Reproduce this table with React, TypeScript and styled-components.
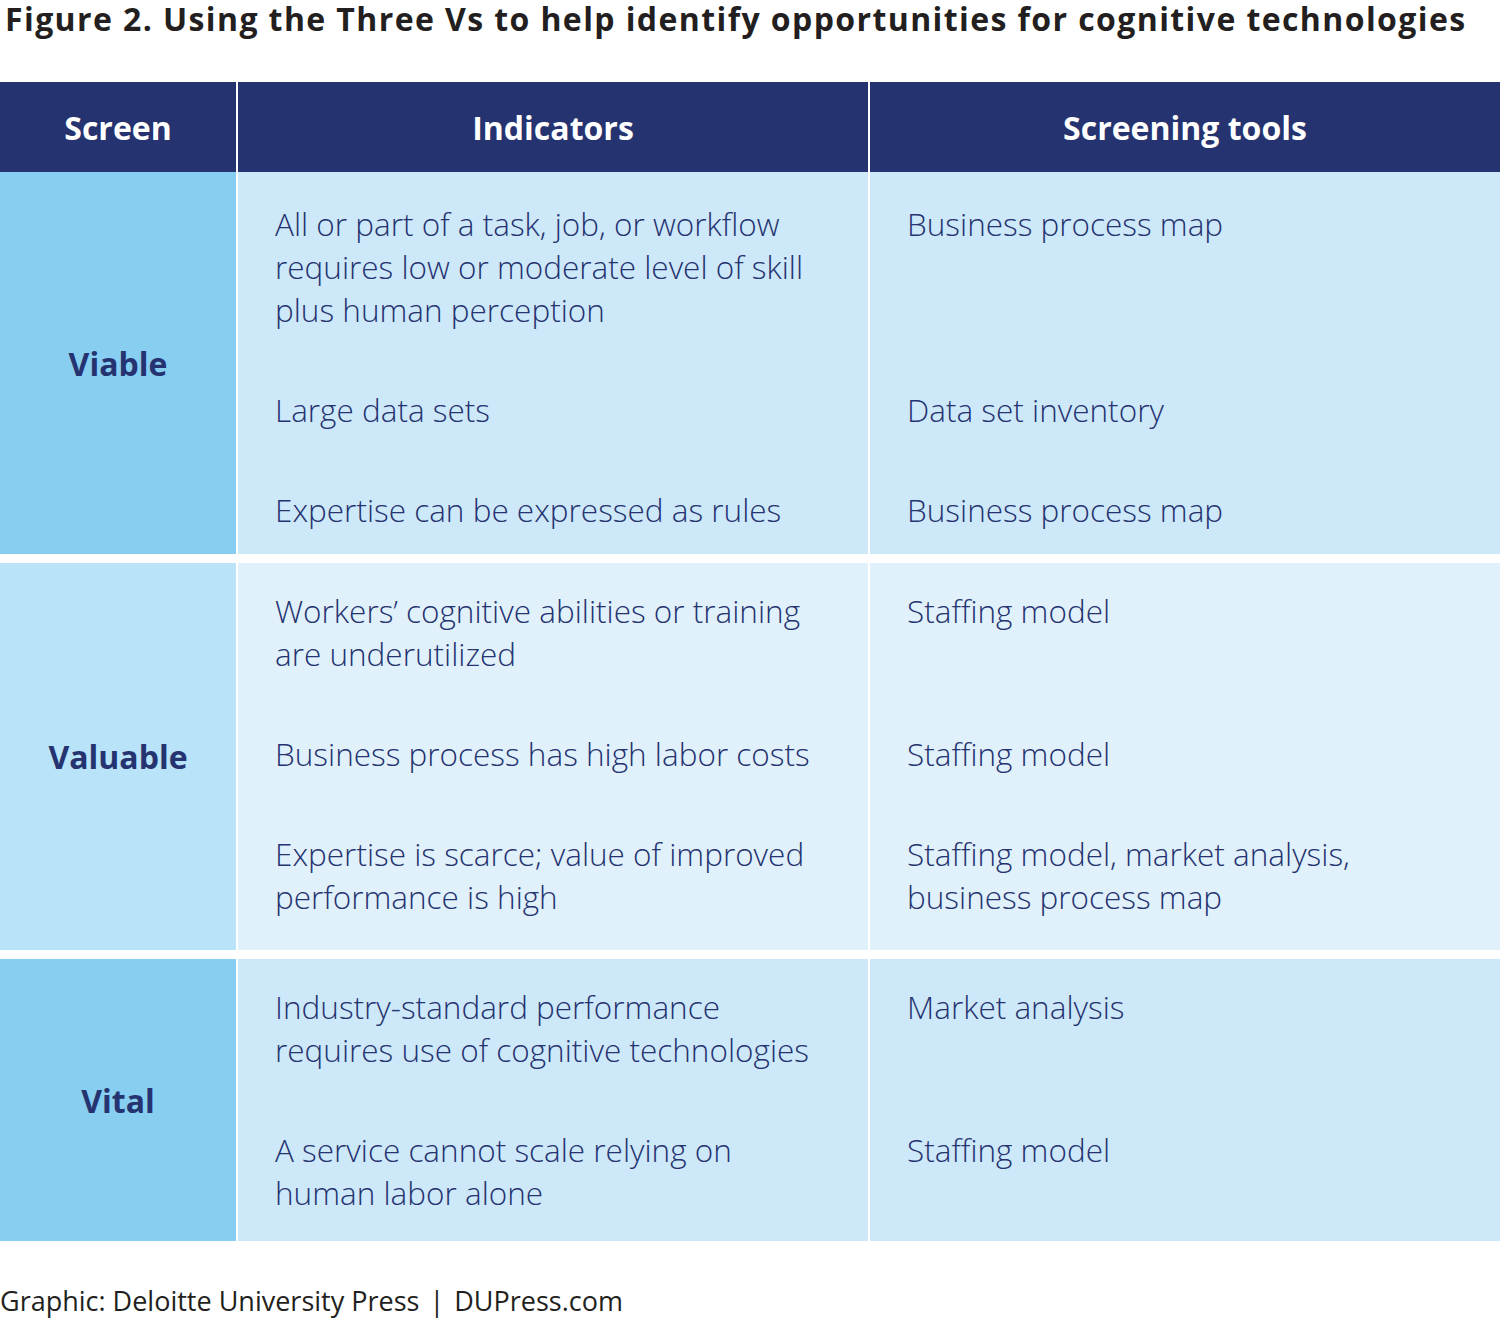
import styled, { createGlobalStyle } from "styled-components";

const GlobalStyle = createGlobalStyle`
  html, body {
    margin: 0;
    padding: 0;
    background: #ffffff;
  }
  body {
    font-family: "Open Sans", "Noto Sans", sans-serif;
  }
`;

const NAVY = "#253370";

const Page = styled.div`
  width: 1506px;
  min-height: 1321px;
  background: #ffffff;
`;

const Title = styled.h1`
  margin: 0;
  padding: 0 0 0 5px;
  font-size: 32px;
  line-height: 38px;
  letter-spacing: 1.4px;
  font-weight: 700;
  color: #231f20;
  white-space: nowrap;
`;

const Table = styled.div`
  width: 1500px;
  margin-top: 44px;
  display: flex;
  flex-direction: column;
`;

const Grid = styled.div`
  display: grid;
  grid-template-columns: 236px 630px 630px;
  column-gap: 2px;
  background: #ffffff;

  & + & + & {
    margin-top: 9px;
  }
`;

const HeadCell = styled.div`
  height: 90px;
  background: ${NAVY};
  color: #ffffff;
  font-size: 32px;
  font-weight: 700;
  display: flex;
  align-items: center;
  justify-content: center;
`;

const ScreenCell = styled.div<{ $bg: string; $span: number }>`
  grid-row: 1 / span ${(p) => p.$span};
  grid-column: 1;
  background: ${(p) => p.$bg};
  color: ${NAVY};
  font-size: 32px;
  font-weight: 700;
  display: flex;
  align-items: center;
  justify-content: center;
`;

const ItemCell = styled.div<{ $bg: string; $top: number; $bottom: number }>`
  background: ${(p) => p.$bg};
  padding: ${(p) => p.$top}px 20px ${(p) => p.$bottom}px 37px;
  color: ${NAVY};
  font-size: 31.5px;
  font-weight: 300;
  line-height: 43px;
`;

const Footer = styled.div`
  margin-top: 42px;
  font-size: 27px;
  line-height: 36px;
  color: #231f20;
  white-space: nowrap;
`;

const Sep = styled.span`
  margin: 0 10px;
`;

type Item = { indicator: string[]; tool: string[] };
type Section = {
  screen: string;
  side: string;
  body: string;
  top: number;
  bottom: number;
  items: Item[];
};

const sections: Section[] = [
  {
    screen: "Viable",
    side: "#87cef0",
    body: "#cde8f9",
    top: 30,
    bottom: 23,
    items: [
      {
        indicator: [
          "All or part of a task, job, or workflow",
          "requires low or moderate level of skill",
          "plus human perception",
        ],
        tool: ["Business process map"],
      },
      { indicator: ["Large data sets"], tool: ["Data set inventory"] },
      {
        indicator: ["Expertise can be expressed as rules"],
        tool: ["Business process map"],
      },
    ],
  },
  {
    screen: "Valuable",
    side: "#b8e3f9",
    body: "#e0f1fb",
    top: 26,
    bottom: 32,
    items: [
      {
        indicator: [
          "Workers\u2019 cognitive abilities or training",
          "are underutilized",
        ],
        tool: ["Staffing model"],
      },
      {
        indicator: ["Business process has high labor costs"],
        tool: ["Staffing model"],
      },
      {
        indicator: [
          "Expertise is scarce; value of improved",
          "performance is high",
        ],
        tool: ["Staffing model, market analysis,", "business process map"],
      },
    ],
  },
  {
    screen: "Vital",
    side: "#87cef0",
    body: "#cde8f9",
    top: 26,
    bottom: 27,
    items: [
      {
        indicator: [
          "Industry-standard performance",
          "requires use of cognitive technologies",
        ],
        tool: ["Market analysis"],
      },
      {
        indicator: ["A service cannot scale relying on", "human labor alone"],
        tool: ["Staffing model"],
      },
    ],
  },
];

const Lines = ({ lines }: { lines: string[] }) => (
  <>
    {lines.map((l, i) => (
      <div key={i}>{l}</div>
    ))}
  </>
);

export default function App() {
  return (
    <Page>
      <GlobalStyle />
      <Title>
        Figure 2. Using the Three Vs to help identify opportunities for
        cognitive technologies
      </Title>
      <Table>
        <Grid>
          <HeadCell>Screen</HeadCell>
          <HeadCell>Indicators</HeadCell>
          <HeadCell>Screening tools</HeadCell>
        </Grid>
        {sections.map((s) => (
          <Grid key={s.screen}>
            <ScreenCell $bg={s.side} $span={s.items.length}>
              {s.screen}
            </ScreenCell>
            {s.items.map((it, i) => {
              const top = i === 0 ? s.top : 0;
              const bottom = i === s.items.length - 1 ? s.bottom : 57;
              return [
                <ItemCell key={`i${i}`} $bg={s.body} $top={top} $bottom={bottom}>
                  <Lines lines={it.indicator} />
                </ItemCell>,
                <ItemCell key={`t${i}`} $bg={s.body} $top={top} $bottom={bottom}>
                  <Lines lines={it.tool} />
                </ItemCell>,
              ];
            })}
          </Grid>
        ))}
      </Table>
      <Footer>
        Graphic: Deloitte University Press<Sep>|</Sep>DUPress.com
      </Footer>
    </Page>
  );
}
